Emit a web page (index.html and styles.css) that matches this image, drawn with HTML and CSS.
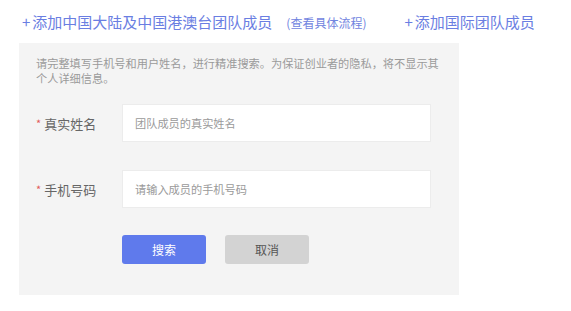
FILE: index.html
```html
<!DOCTYPE html>
<html lang="zh-CN">
<head>
    <meta charset="UTF-8">
    <meta name="viewport" content="width=device-width, initial-scale=1.0">
    <title>添加团队成员</title>
    <link rel="stylesheet" href="styles.css">
</head>

<body>
    <div class="page">
        <div class="tabs">
            <a class="tab"><span class="plus">+</span>添加中国大陆及中国港澳台团队成员</a>
            <a class="tab-link">(查看具体流程)</a>
            <a class="tab tab-intl"><span class="plus">+</span>添加国际团队成员</a>
        </div>

        <div class="panel">
            <p class="tip">请完整填写手机号和用户姓名，进行精准搜索。为保证创业者的隐私，将不显示其个人详细信息。</p>

            <div class="form-row">
                <label class="label" for="name"><span class="star">*</span>真实姓名</label>
                <input class="field" id="name" type="text" placeholder="团队成员的真实姓名">
            </div>

            <div class="form-row">
                <label class="label" for="phone"><span class="star">*</span>手机号码</label>
                <input class="field" id="phone" type="text" placeholder="请输入成员的手机号码">
            </div>

            <div class="actions">
                <button class="btn btn-search">搜索</button>
                <button class="btn btn-cancel">取消</button>
            </div>
        </div>
    </div>
</body>
</html>
```

FILE: styles.css
```css
body {
    margin: 0;
    font-family: "Noto Sans CJK SC", "Liberation Sans", sans-serif;
    background: #fff;
}

.page {
    padding: 0 0 0 19px;
}

.tabs {
    display: flex;
    align-items: baseline;
    height: 43px;
    padding-left: 3px;
    box-sizing: border-box;
    padding-top: 11px;
}

.tab {
    font-size: 15px;
    line-height: 22px;
    color: #6a7ee2;
    cursor: pointer;
}

.plus {
    margin-right: 2px;
}

.tab-link {
    font-size: 12px;
    color: #7184e0;
    margin-left: 14px;
    cursor: pointer;
}

.tab-intl {
    margin-left: 38px;
}

.panel {
    width: 440px;
    height: 252px;
    box-sizing: border-box;
    background: #f4f4f4;
    padding: 13px 17px 0 17px;
}

.tip {
    margin: 0;
    font-size: 11.2px;
    line-height: 15px;
    color: #9a9a9a;
}

.form-row {
    display: flex;
    align-items: center;
    margin-top: 18px;
}

.form-row + .form-row {
    margin-top: 28px;
}

.label {
    width: 86px;
    font-size: 13px;
    color: #666;
}

.star {
    color: #e25c5c;
    font-size: 11px;
    margin-right: 3px;
    vertical-align: 1px;
}

.field {
    width: 309px;
    height: 38px;
    box-sizing: border-box;
    border: 1px solid #ececec;
    background: #fff;
    padding: 0 12px;
    font-family: inherit;
    font-size: 11.2px;
    color: #333;
    outline: none;
}

.field::placeholder {
    color: #9a9a9a;
}

.actions {
    display: flex;
    gap: 19px;
    margin-top: 27px;
    padding-left: 86px;
}

.btn {
    width: 84px;
    height: 29px;
    border: none;
    border-radius: 3px;
    font-family: inherit;
    font-size: 12px;
    cursor: pointer;
}

.btn-search {
    background: #5f7aec;
    color: #fff;
}

.btn-cancel {
    background: #d3d3d3;
    color: #555;
}
```
